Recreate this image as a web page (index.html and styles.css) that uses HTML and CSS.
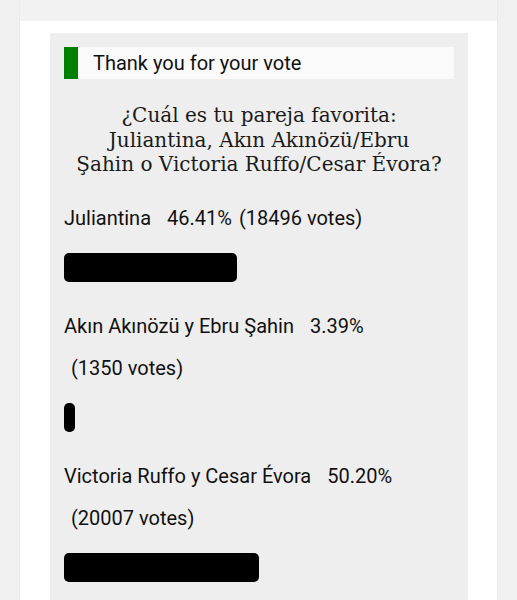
FILE: index.html
```html
<!DOCTYPE html>
<html lang="es">
<head>
    <meta charset="UTF-8">
    <meta name="viewport" content="width=device-width, initial-scale=1.0">
    <title>Encuesta</title>
    <link rel="stylesheet" href="styles.css">
</head>
<body>

    <div class="card">
        <div class="card-top"></div>

        <div class="poll">
            <div class="poll-msg">
                <span class="poll-msg-mark"></span>
                <span class="poll-msg-text">Thank you for your vote</span>
            </div>

            <h2 class="poll-question">¿Cuál es tu pareja favorita:<br>Juliantina, Akın Akınözü/Ebru<br>Şahin o Victoria Ruffo/Cesar Évora?</h2>

            <div class="poll-answer">
                <div class="poll-label">Juliantina<span class="pct">46.41%</span><span class="votes">&nbsp;(18496 votes)</span></div>
                <div class="poll-bar" style="width: 173px;"></div>
            </div>

            <div class="poll-answer">
                <div class="poll-label">Akın Akınözü y Ebru Şahin<span class="pct">3.39%</span><span class="votes">&nbsp;(1350 votes)</span></div>
                <div class="poll-bar" style="width: 11px;"></div>
            </div>

            <div class="poll-answer">
                <div class="poll-label">Victoria Ruffo y Cesar Évora<span class="pct">50.20%</span><span class="votes">&nbsp;(20007 votes)</span></div>
                <div class="poll-bar" style="width: 195px;"></div>
            </div>
        </div>
    </div>

</body>
</html>
```

FILE: styles.css
```css
body {
    margin: 0;
    background-color: #f0f0f0;
    font-family: Roboto, "Liberation Sans", Arial, sans-serif;
    color: #111;
}

.card {
    margin: 0 20px;
    background-color: white;
    box-shadow: 0 0 1px rgba(0, 0, 0, 0.12);
}

.card-top {
    height: 21px;
    background-color: #f2f2f2;
}

.poll {
    margin: 12px 29px 0 30px;
    padding: 14px 14px 10px;
    background-color: #eeeeee;
}

.poll-msg {
    display: flex;
    align-items: center;
    height: 32px;
    background-color: #fafafa;
}

.poll-msg-mark {
    width: 14px;
    height: 100%;
    background-color: #008000;
}

.poll-msg-text {
    padding-left: 15px;
    font-size: 20px;
}

.poll-question {
    margin: 24px -4px 20px;
    font-family: "DejaVu Serif", "Liberation Serif", serif;
    font-size: 20px;
    font-weight: normal;
    line-height: 24.5px;
    text-align: center;
    white-space: nowrap;
    color: #1a1a1a;
}

.poll-answer {
    margin-bottom: 23px;
}

.poll-label {
    font-size: 20px;
    line-height: 42px;
}

.pct {
    margin-left: 16px;
}

.votes {
    display: inline-block;
    padding-left: 2px;
}

.poll-bar {
    height: 29px;
    margin-top: 14px;
    background-color: black;
    border-radius: 5px;
}
```
